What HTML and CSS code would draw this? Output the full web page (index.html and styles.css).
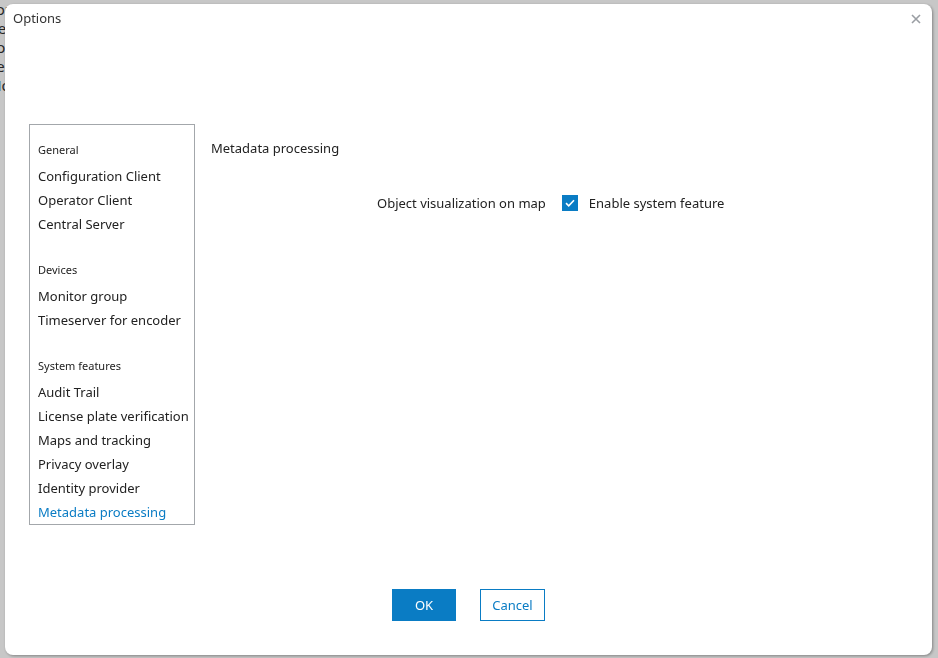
FILE: index.html
```html
<!DOCTYPE html>
<html lang="en">
<head>
    <meta charset="UTF-8">
    <title>Options</title>
    <link rel="stylesheet" href="styles.css">
</head>
<body>
    <div class="page">
        <p>You can change the design of your <a>Bosch Video Management System</a> installation.</p>
        <p>Before you change the settings, review the configuration.</p>
        <p>Some options require a restart of the <span class="warn">Configuration Client</span>.</p>
        <p>See the online help for details.</p>
        <p>More information in the manual.</p>
    </div>
    <div class="overlay"></div>

    <section class="dialog">
        <header class="dialog-head">
            <h1>Options</h1>
            <button class="close" aria-label="Close">
                <svg width="10" height="10" viewBox="0 0 10 10">
                    <path d="M1 1 L9 9 M9 1 L1 9" stroke="#9a9ea3" stroke-width="1.6" fill="none"/>
                </svg>
            </button>
        </header>

        <div class="dialog-body">
            <nav class="sidebar">
                <h2>General</h2>
                <a>Configuration Client</a>
                <a>Operator Client</a>
                <a>Central Server</a>

                <h2>Devices</h2>
                <a>Monitor group</a>
                <a>Timeserver for encoder</a>

                <h2>System features</h2>
                <a>Audit Trail</a>
                <a>License plate verification</a>
                <a>Maps and tracking</a>
                <a>Privacy overlay</a>
                <a>Identity provider</a>
                <a class="active">Metadata processing</a>
            </nav>

            <div class="content">
                <h3>Metadata processing</h3>
                <div class="row">
                    <span class="label">Object visualization on map</span>
                    <label class="check">
                        <span class="box">
                            <svg width="10" height="8" viewBox="0 0 10 8">
                                <path d="M1 4.2 L3.7 6.8 L9 1.2" stroke="#fff" stroke-width="1.6" fill="none"/>
                            </svg>
                        </span>
                        Enable system feature
                    </label>
                </div>
            </div>
        </div>

        <footer class="dialog-foot">
            <button class="btn primary">OK</button>
            <button class="btn">Cancel</button>
        </footer>
    </section>
</body>
</html>
```

FILE: styles.css
```css
* {
    box-sizing: border-box;
}

body {
    margin: 0;
    height: 100vh;
    overflow: hidden;
    font-family: 'Noto Sans', 'Open Sans', sans-serif;
    background: #fff;
    color: #222;
}

.page {
    margin-left: -12px;
    font-size: 15px;
    line-height: 19px;
    color: #333;

    p {
        margin: 0;
        white-space: nowrap;
    }

    a {
        color: #1a5bb5;
    }

    .warn {
        color: #c05a00;
    }
}

.overlay {
    position: fixed;
    inset: 0;
    background: rgba(0, 0, 0, 0.22);
}

.dialog {
    position: fixed;
    left: 5px;
    top: 4px;
    width: 927px;
    height: 651px;
    background: #fff;
    border-radius: 8px;
    box-shadow: 1px 1px 3px rgba(0, 0, 0, 0.35);
    display: flex;
    flex-direction: column;
}

.dialog-head {
    display: flex;
    justify-content: space-between;
    align-items: flex-start;
    padding: 5px 8px 0 8px;
    height: 120px;

    h1 {
        margin: 0;
        font-size: 13px;
        font-weight: 400;
        color: #333;
        line-height: 18px;
    }

    .close {
        border: 0;
        background: none;
        padding: 0;
        margin: 4px 2px 0 0;
        width: 12px;
        height: 12px;
        display: flex;
        align-items: center;
        justify-content: center;
    }
}

.dialog-body {
    flex: 1;
    display: flex;
    padding-left: 24px;
}

.sidebar {
    width: 166px;
    height: 401px;
    border: 1px solid #a3a7ab;
    padding: 15px 0 0 8px;
    display: flex;
    flex-direction: column;

    h2 {
        margin: 0;
        font-size: 11px;
        font-weight: 400;
        line-height: 20px;
        color: #222;
        padding-bottom: 4px;
    }

    a {
        font-size: 13px;
        line-height: 24px;
        color: #222;
        white-space: nowrap;
    }

    a + h2 {
        margin-top: 24px;
    }

    .active {
        color: #0a7cc4;
    }
}

.content {
    flex: 1;
    padding: 14px 0 0 16px;

    h3 {
        margin: 0;
        font-size: 13px;
        font-weight: 400;
        line-height: 20px;
        color: #222;
    }

    .row {
        display: flex;
        align-items: center;
        margin-top: 36px;
        padding-left: 166px;
        font-size: 13px;
        color: #222;
    }

    .label {
        margin-right: 16px;
    }

    .check {
        display: flex;
        align-items: center;
        gap: 11px;
    }

    .box {
        width: 16px;
        height: 16px;
        background: #0a7cc4;
        display: flex;
        align-items: center;
        justify-content: center;
    }
}

.dialog-foot {
    display: flex;
    justify-content: center;
    gap: 24px;
    padding: 0 0 34px 0;

    .btn {
        width: 65px;
        height: 32px;
        font-family: inherit;
        font-size: 13px;
        background: #fff;
        color: #0a7cc4;
        border: 1px solid #0a7cc4;
        border-radius: 0;
    }

    .primary {
        width: 64px;
        background: #0a7cc4;
        color: #fff;
    }
}
```
